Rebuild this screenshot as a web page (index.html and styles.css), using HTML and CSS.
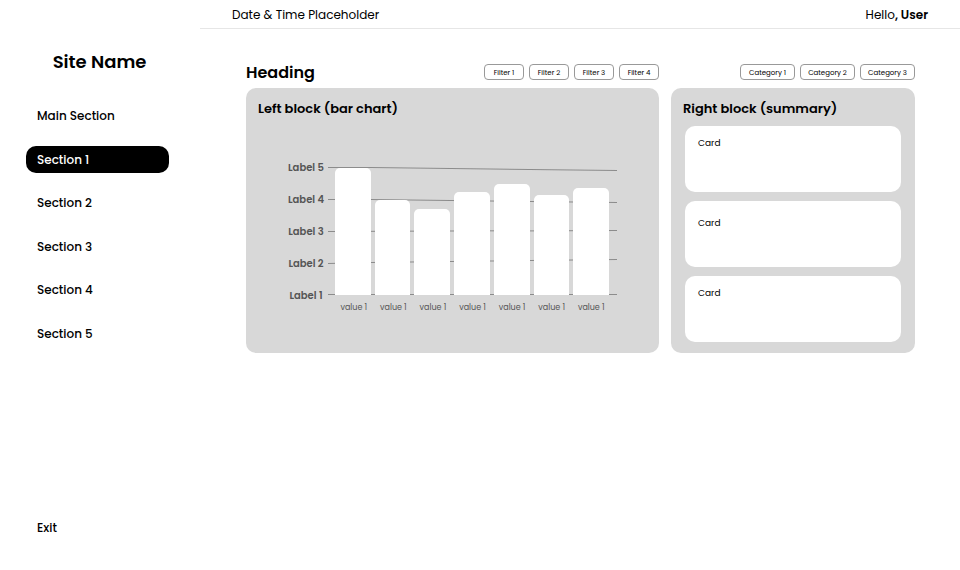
FILE: index.html
```html
<!DOCTYPE html>
<html lang="en">
<head>
  <meta charset="utf-8">
  <meta name="viewport" content="width=device-width, initial-scale=1">
  <title>Site Name</title>
  <link rel="stylesheet" href="styles.css">
</head>
<body>
  <div class="app">
    <aside class="sidebar">
      <div class="brand">Site Name</div>
      <nav class="nav">
        <a class="nav-link" href="#main">Main Section</a>
        <a class="nav-link active" href="#s1" aria-current="page">Section 1</a>
        <a class="nav-link" href="#s2">Section 2</a>
        <a class="nav-link" href="#s3">Section 3</a>
        <a class="nav-link" href="#s4">Section 4</a>
        <a class="nav-link" href="#s5">Section 5</a>
      </nav>
      <a class="nav-link exit" href="#exit">Exit</a>
    </aside>

    <div class="page">
      <header class="topbar">
        <span>Date &amp; Time Placeholder</span>
        <span>Hello<b>, User</b></span>
      </header>

      <main class="content">
        <section class="column">
          <div class="toolbar">
            <h1 class="heading">Heading</h1>
            <div class="chips">
              <button class="chip filter" type="button">Filter 1</button>
              <button class="chip filter" type="button">Filter 2</button>
              <button class="chip filter" type="button">Filter 3</button>
              <button class="chip filter" type="button">Filter 4</button>
            </div>
          </div>
          <div class="panel">
            <h2 class="panel-title">Left block (bar chart)</h2>
            <div class="chart">
              <div class="labels">
                <span>Label 5</span>
                <span>Label 4</span>
                <span>Label 3</span>
                <span>Label 2</span>
                <span>Label 1</span>
              </div>
              <div class="plot">
                <svg class="lines" viewBox="0 0 288 128" preserveAspectRatio="none" aria-hidden="true">
                  <path d="M0 .5H43L288 3.5M0 32.5H43L288 35.5M0 64.5L288 63.5M0 96.5L43 95.5L288 92.5M0 127.5H288"/>
                </svg>
                <div class="bars">
                  <div class="bar" style="height:127px"></div>
                  <div class="bar" style="height:95px"></div>
                  <div class="bar" style="height:86px"></div>
                  <div class="bar" style="height:103px"></div>
                  <div class="bar" style="height:111px"></div>
                  <div class="bar" style="height:100px"></div>
                  <div class="bar" style="height:107px"></div>
                </div>
                <div class="values">
                  <span>value 1</span>
                  <span>value 1</span>
                  <span>value 1</span>
                  <span>value 1</span>
                  <span>value 1</span>
                  <span>value 1</span>
                  <span>value 1</span>
                </div>
              </div>
            </div>
          </div>
        </section>

        <section class="column">
          <div class="toolbar end">
            <div class="chips">
              <button class="chip category" type="button">Category 1</button>
              <button class="chip category" type="button">Category 2</button>
              <button class="chip category" type="button">Category 3</button>
            </div>
          </div>
          <div class="panel">
            <h2 class="panel-title">Right block (summary)</h2>
            <div class="cards">
              <article class="card">Card</article>
              <article class="card roomy">Card</article>
              <article class="card">Card</article>
            </div>
          </div>
        </section>
      </main>
    </div>
  </div>
</body>
</html>
```
FILE: styles.css
```css
* {
  box-sizing: border-box;
}

body {
  margin: 0;
  background: #fff;
  color: #000;
  font-family: Poppins, Inter, sans-serif;
  font-size: 12px;
}

h1,
h2 {
  margin: 0;
  font-weight: 600;
}

.app {
  display: grid;
  grid-template-columns: 200px 1fr;
  min-height: 100vh;
}

.sidebar {
  display: flex;
  flex-direction: column;
  padding: 48px 31px 29px 26px;
}

.brand {
  padding-left: 4px;
  font-size: 18px;
  font-weight: 600;
  line-height: 28px;
  text-align: center;
}

.nav {
  display: flex;
  flex-direction: column;
  justify-content: space-between;
  height: 245px;
  margin-top: 26px;
}

.nav-link {
  padding: 0 11px;
  border-radius: 10px;
  color: #000;
  font-weight: 500;
  line-height: 27px;
  text-decoration: none;
}

.nav-link.active {
  background: #000;
  color: #fff;
}

.exit {
  margin-top: auto;
}

.topbar {
  display: flex;
  justify-content: space-between;
  padding: 1px 32px 0;
  border-bottom: 1px solid #e6e6e6;
  line-height: 27px;
}

.topbar b {
  font-weight: 600;
}

.content {
  display: grid;
  grid-template-columns: 413fr 244fr;
  gap: 12px;
  padding: 35px 45px 0 46px;
}

.column {
  display: flex;
  flex-direction: column;
}

.toolbar {
  display: flex;
  align-items: center;
  justify-content: space-between;
  height: 16px;
  margin-bottom: 8px;
}

.toolbar.end {
  justify-content: flex-end;
}

.heading {
  font-size: 16px;
}

.chips {
  display: flex;
  gap: 5px;
}

.chip {
  height: 16px;
  padding: 1px 0 0;
  border: 1px solid #999;
  border-radius: 4px;
  background: #fff;
  color: #000;
  font: inherit;
  font-size: 7px;
}

.filter {
  width: 40px;
}

.category {
  width: 55px;
}

.panel {
  flex: 1;
  padding: 11px 12px;
  border-radius: 10px;
  background: #d8d8d8;
}

.panel-title {
  font-size: 13px;
  line-height: 20px;
}

.chart {
  display: grid;
  grid-template-columns: 36px 1fr;
  gap: 4px;
  padding: 32px 30px 0;
  color: #555;
}

.labels {
  display: flex;
  flex-direction: column;
  padding-top: 1px;
  font-size: 10px;
  font-weight: 600;
  line-height: 32px;
  text-align: center;
  white-space: nowrap;
}

.plot {
  position: relative;
  padding: 16px 8px 0 7px;
}

.lines {
  position: absolute;
  top: 16px;
  left: 0;
  width: 100%;
  height: 128px;
  fill: none;
  stroke: #8c8c8c;
}

.bars {
  position: relative;
  display: flex;
  align-items: flex-end;
  gap: 4px;
  height: 128px;
}

.bar {
  flex: 1;
  border-radius: 5px 5px 0 0;
  background: #fff;
}

.values {
  display: grid;
  grid-template-columns: repeat(7, 1fr);
  gap: 4px;
  padding-left: 1px;
  font-size: 8px;
  line-height: 26px;
  text-align: center;
  white-space: nowrap;
}

.cards {
  display: flex;
  flex-direction: column;
  gap: 9px;
  padding: 7px 2px 0;
}

.card {
  height: 66px;
  padding: 10px 13px;
  border-radius: 10px;
  background: #fff;
  font-size: 9px;
  line-height: 14px;
}

.card.roomy {
  padding-top: 15px;
}
```
